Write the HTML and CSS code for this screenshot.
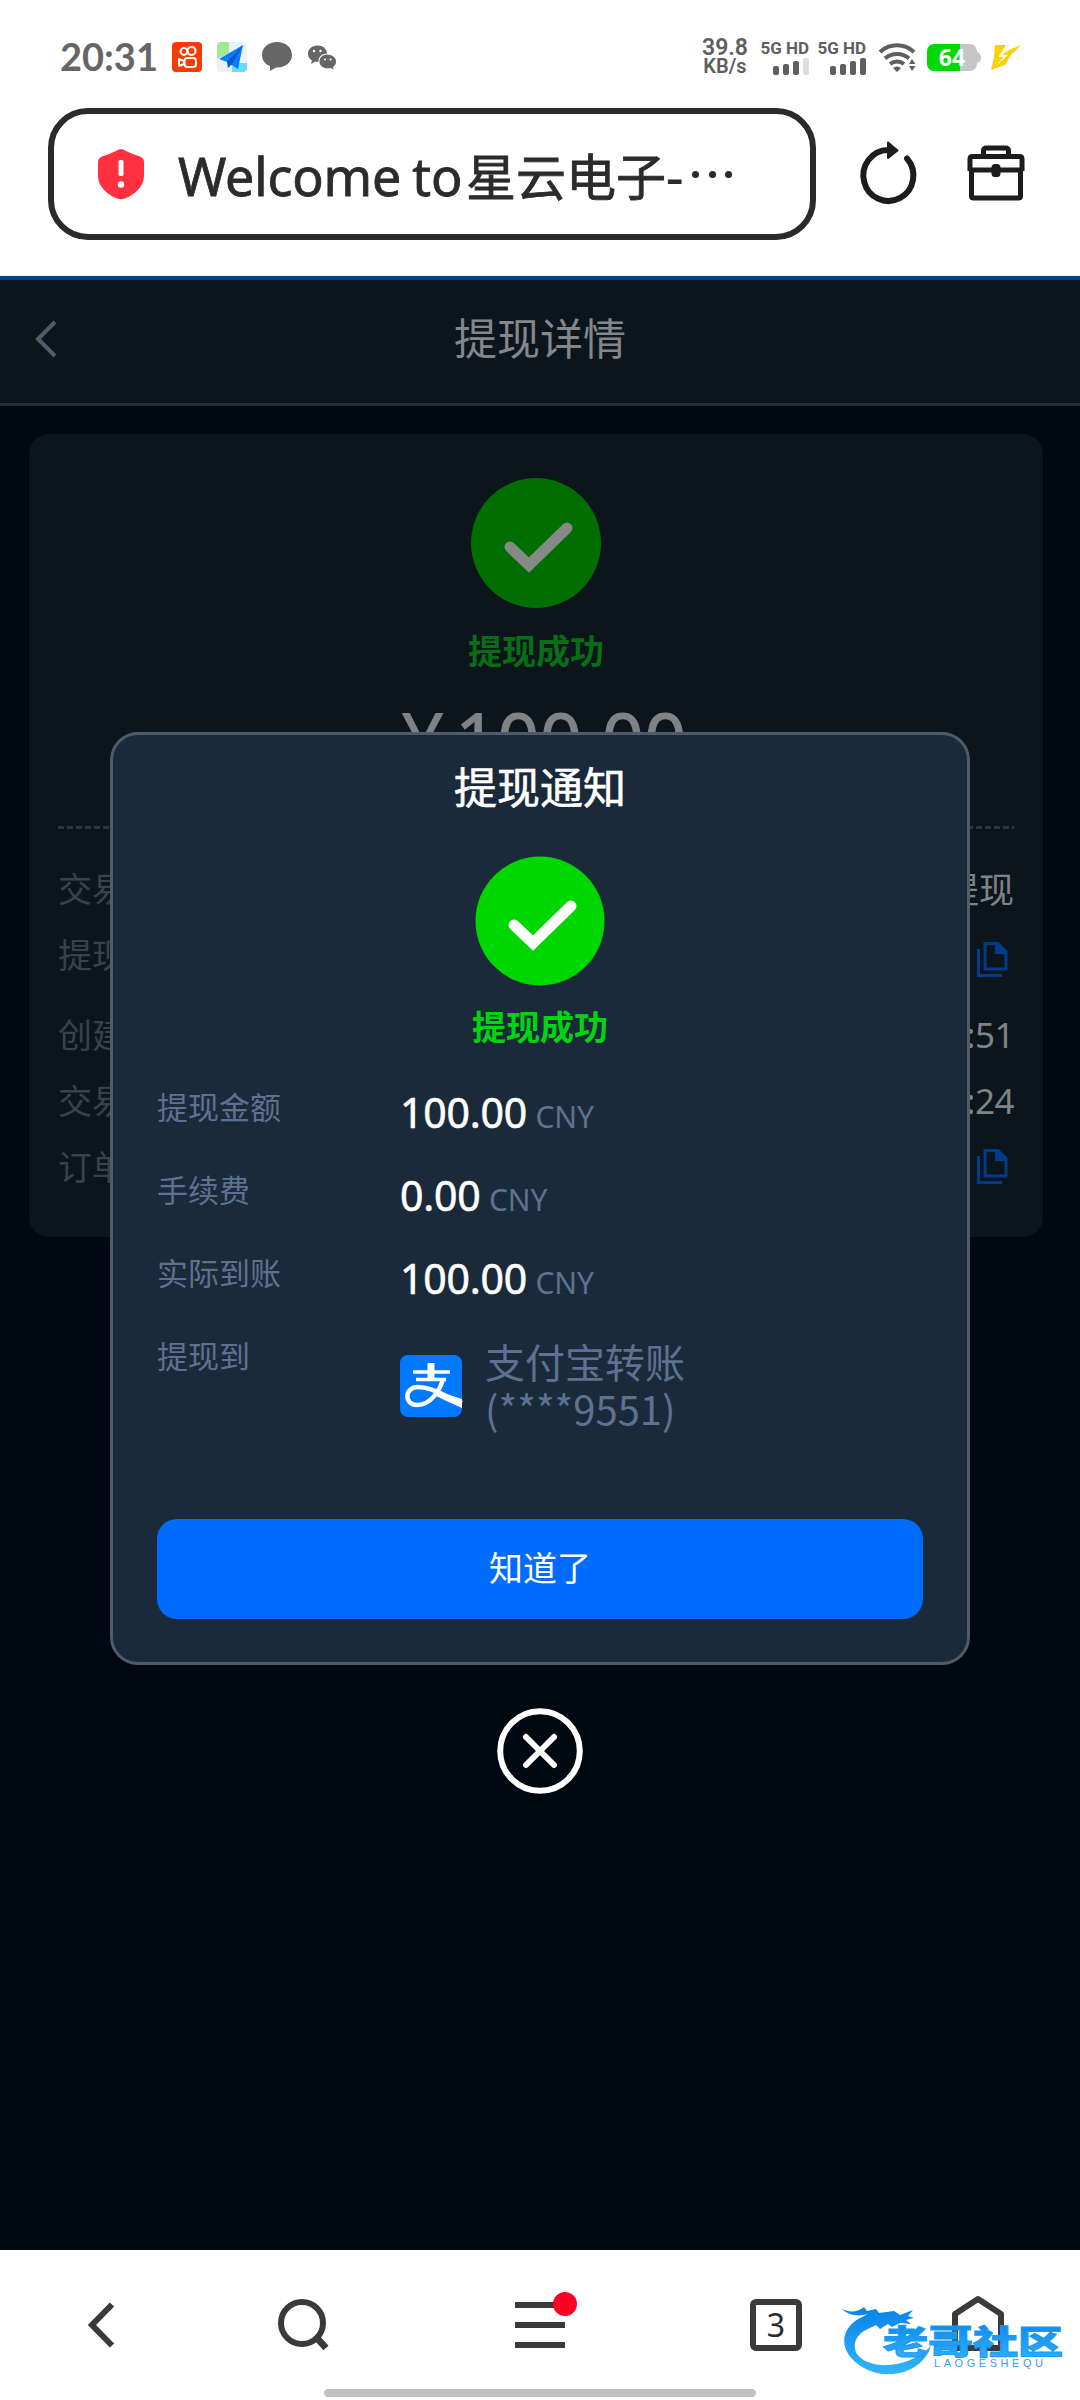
FILE: index.html
```
<!DOCTYPE html>
<html lang="zh-CN">
<head>
  <meta charset="UTF-8" />
  <title>提现详情</title>
  <link rel="stylesheet" href="styles.css">
</head>
<body>

  <!-- 状态栏 -->
  <div class="status-bar">
    <div class="status-left">
      <span class="clock">20:31</span>
      <svg class="app-icon" viewBox="0 0 30 30">
        <rect width="30" height="30" rx="4" fill="#fb3a00"/>
        <g fill="none" stroke="#fff" stroke-width="2">
          <circle cx="12" cy="9.5" r="3.4"/>
          <circle cx="19.5" cy="9" r="4"/>
          <rect x="12.5" y="16" width="11.5" height="9" rx="3"/>
          <path d="M12 19 L7 17 V24 L12 22 Z" stroke-linejoin="round"/>
        </g>
      </svg>
      <svg class="app-icon map-icon" viewBox="0 0 30 30">
        <rect width="30" height="30" rx="4" fill="#e9f1f9"/>
        <path d="M4 0 H12 V11 L0 17 V4 A4 4 0 0 1 4 0 Z" fill="#a0ea91"/>
        <path d="M15 30 V24 L22 21 H30 V26 A4 4 0 0 1 26 30 Z" fill="#68dcfb"/>
        <path d="M26 3 L2 17 L10 20 L21 27 Z" fill="#0b7dfa"/>
        <path d="M26 3 L10 20 L11 26 L15 22 Z" fill="#0558ce"/>
      </svg>
      <svg class="app-icon chat-icon" viewBox="0 0 30 30">
        <path d="M15 0 C23 0 30 5 30 13 C30 21 22 26 14 25.500 L8 29 L8 24 C3 22 0 18 0 13 C0 5 7 0 15 0 Z" fill="#666"/>
      </svg>
      <svg class="wechat-icon" viewBox="0 0 28 25">
        <path d="M9.500 0.500 C15 0.500 19 4 19 8.500 C14 8.500 10 12 10.500 17 L7 16.500 L3 19 L4 15.500 C1.500 14 0 12 0 9 C0 4 4 0.500 9.500 0.500 Z" fill="#666"/>
        <path d="M19 9.500 C24 9.500 28 12.500 28 16.500 C28 19 27 20.500 25 22 L25.500 24.500 L22.500 23 C16 24.500 11.500 21 11.500 16.500 C11.500 12.500 15 9.500 19 9.500 Z" fill="#666"/>
        <g fill="#fff"><circle cx="6" cy="6" r="1.200"/><circle cx="12.500" cy="6" r="1.200"/><circle cx="17" cy="14.500" r="1"/><circle cx="22.500" cy="14.500" r="1"/></g>
      </svg>
    </div>

    <div class="status-right">
      <div class="net-speed"><span>39.8</span><span>KB/s</span></div>
      <div class="signal">
        <span>5G HD</span>
        <svg viewBox="0 0 36 17" fill="#5f5f5f">
          <rect x="0" y="8" width="6" height="9" rx="2"/>
          <rect x="10" y="6" width="6" height="11" rx="2"/>
          <rect x="20" y="3" width="6" height="14" rx="2"/>
          <rect x="30" y="0" width="6" height="17" rx="2" fill="#dedede"/>
        </svg>
      </div>
      <div class="signal">
        <span>5G HD</span>
        <svg viewBox="0 0 36 17" fill="#5f5f5f">
          <rect x="0" y="8" width="6" height="9" rx="2"/>
          <rect x="10" y="6" width="6" height="11" rx="2"/>
          <rect x="20" y="3" width="6" height="14" rx="2"/>
          <rect x="30" y="0" width="6" height="17" rx="2"/>
        </svg>
      </div>
      <svg class="wifi" viewBox="0 0 37 29">
        <g fill="none" stroke="#5f5f5f" stroke-width="4">
          <path d="M1 9 A25 25 0 0 1 35 9"/>
          <path d="M6 15.500 A18 18 0 0 1 30 15.500"/>
          <path d="M11 21 A11 11 0 0 1 25 21"/>
        </g>
        <path d="M14 25 Q18 22 22 25 L18 29 Z M30 21 L33 16 L36.500 21 Z M30 23 H36.500 L33 28 Z" fill="#5f5f5f"/>
      </svg>
      <svg class="battery" viewBox="0 0 54 27">
        <rect x="4" width="46" height="27" rx="7" fill="#c6c6c6"/>
        <path d="M50 8 Q54 9 54 13.500 Q54 18 50 19 Z" fill="#c6c6c6"/>
        <path d="M7 0 H33 V27 H7 A7 7 0 0 1 0 20 V7 A7 7 0 0 1 7 0 Z" fill="#00d800"/>
        <text x="25" y="21.500" class="battery-text">64</text>
      </svg>
      <svg class="bolt" viewBox="0 0 30 25">
        <path d="M4 0 H15 L12 9 L18 5 L30 0 L20 10 L14 20 L0 25 L3 12 Z" fill="#fad00a"/>
        <path d="M15 0 L7 12 H12 L5 21 L17 10 H12 L18 0 Z" fill="#fff8da"/>
      </svg>
    </div>
  </div>

  <!-- 浏览器地址栏 -->
  <div class="browser-bar">
    <div class="url-box">
      <svg class="shield" viewBox="0 0 46 50">
        <path d="M23 0 Q25 0 28 2 Q34 5 42 7.500 Q46 9 46 13 V27 C46 38 36 46 27 49.500 Q23 51 19 49.500 C10 46 0 38 0 27 V13 Q0 9 4 7.500 Q12 5 18 2 Q21 0 23 0 Z" fill="#ff3141"/>
        <rect x="20.500" y="11" width="5" height="16" rx="1.500" fill="#fff"/>
        <circle cx="23" cy="35.500" r="3.200" fill="#fff"/>
      </svg>
      <div class="url-text"><span class="latin">Welcome to</span><span>星云电子</span><span class="dash">-</span><i></i><i></i><i></i></div>
    </div>
    <svg class="refresh" viewBox="0 0 56 62">
      <path d="M47 17.500 A25 25.500 0 1 1 28 9" fill="none" stroke="#1c1c1c" stroke-width="6" stroke-linecap="round"/>
      <path d="M28 1.500 L37.500 9.500 L28 17 Z" fill="#1c1c1c" stroke="#1c1c1c" stroke-width="2" stroke-linejoin="round"/>
    </svg>
    <svg class="toolbox" viewBox="0 0 58 56">
      <g fill="none" stroke="#1c1c1c" stroke-width="5" stroke-linejoin="round">
        <path d="M3 26 V14 Q3 11.500 5.500 11.500 H52.500 Q55 11.500 55 14 V26"/>
        <path d="M4.500 25 H53.500 V51 Q53.500 53 51.500 53 H6.500 Q4.500 53 4.500 51 Z"/>
        <path d="M16.500 11 V6 Q16.500 3 19.500 3 H38.500 Q41.500 3 41.500 6 V11"/>
      </g>
      <rect x="24.500" y="19" width="9" height="13" rx="3.500" fill="#1c1c1c"/>
    </svg>
  </div>

  <!-- 页面内容 -->
  <main>
    <header>
      <svg class="back" viewBox="0 0 24 38"><path d="M21 2 L4 19 L21 36" fill="none" stroke="#4f5c6a" stroke-width="4"/></svg>
      <h1>提现详情</h1>
    </header>

    <section class="card">
      <svg class="check" viewBox="0 0 130 130">
        <circle cx="65" cy="65" r="65" fill="#006e00"/>
        <path d="M39 69 L58 87 L96 50" fill="none" stroke="#868a86" stroke-width="11" stroke-linecap="round"/>
      </svg>
      <div class="result">提现成功</div>
      <div class="amount">¥ 100.00</div>
      <div class="divider"></div>
      <ul class="detail-list">
        <li><span>交易</span><b>提现</b></li>
        <li class="tall"><span>提现</span>
          <svg class="copy" viewBox="0 0 31 35"><path d="M1.500 7 V33.500 H25" fill="none" stroke="#003c87" stroke-width="3"/><path d="M8 1.500 H21 L29 9.500 V27 H8 Z" fill="none" stroke="#003c87" stroke-width="3"/><path d="M18 2 H22 L30 10 V12 H18 Z" fill="#003c87"/></svg>
        </li>
        <li><span>创建</span><b class="time">:51</b></li>
        <li><span>交易</span><b class="time">:24</b></li>
        <li><span>订单</span>
          <svg class="copy" viewBox="0 0 31 35"><path d="M1.500 7 V33.500 H25" fill="none" stroke="#003c87" stroke-width="3"/><path d="M8 1.500 H21 L29 9.500 V27 H8 Z" fill="none" stroke="#003c87" stroke-width="3"/><path d="M18 2 H22 L30 10 V12 H18 Z" fill="#003c87"/></svg>
        </li>
      </ul>
    </section>

    <!-- 弹窗 -->
    <div class="popup">
      <div class="dialog">
        <h2>提现通知</h2>
        <svg class="check" viewBox="0 0 130 130">
          <circle cx="65" cy="65" r="64.500" fill="#00d600"/>
          <path d="M39 69 L58 87 L96 50" fill="none" stroke="#fff" stroke-width="11" stroke-linecap="round"/>
        </svg>
        <div class="result">提现成功</div>
        <dl>
          <dt>提现金额</dt><dd>100.00 <small>CNY</small></dd>
          <dt>手续费</dt><dd>0.00 <small>CNY</small></dd>
          <dt>实际到账</dt><dd>100.00 <small>CNY</small></dd>
          <dt>提现到</dt>
          <dd class="account">
            <svg viewBox="0 0 62 62">
              <rect width="62" height="62" rx="8" fill="#0079ff"/>
              <g fill="none" stroke="#fff">
                <path d="M13 17 H50 M16 24.500 H46" stroke-width="3.500"/>
                <path d="M31 8 V24" stroke-width="7"/>
                <path d="M43 24 C40 35 31 50 17 50 C4 50 4 32 18 32 C31 32 42 40 62 48" stroke-width="4.500"/>
              </g>
              <path d="M40 37 L62 44 V53 Q48 47 36 41 Z" fill="#fff"/>
            </svg>
            <p>支付宝转账<br>(****9551)</p>
          </dd>
        </dl>
        <button type="button">知道了</button>
      </div>
      <svg class="close" viewBox="0 0 86 86">
        <circle cx="43" cy="43" r="39.800" fill="none" stroke="#fff" stroke-width="6"/>
        <path d="M29 29 L57 57 M57 29 L29 57" stroke="#fff" stroke-width="6" stroke-linecap="round"/>
      </svg>
    </div>
  </main>

  <!-- 底部导航 -->
  <footer>
    <nav>
      <svg viewBox="0 0 60 60"><path d="M43 9.500 L23 30 L43 50.500" fill="none" stroke="#3a3a3a" stroke-width="6"/></svg>
      <svg viewBox="0 0 60 60"><circle cx="29" cy="28" r="21" fill="none" stroke="#3a3a3a" stroke-width="6"/><path d="M43 42 L53 53" stroke="#3a3a3a" stroke-width="7"/></svg>
      <svg viewBox="0 0 60 60"><path d="M5 10 H55 M5 30 H55 M5 50 H55" stroke="#3a3a3a" stroke-width="6"/><circle cx="55" cy="9" r="12" fill="#ff0024"/></svg>
      <span class="tabs">3</span>
      <svg viewBox="0 0 60 60"><path d="M30 4 L53 19 V53 H7 V19 Z" fill="none" stroke="#3a3a3a" stroke-width="6" stroke-linejoin="round"/></svg>
    </nav>
    <div class="home-handle"></div>
    <!-- 水印 -->
    <svg class="watermark" viewBox="0 0 230 80">
      <defs>
        <linearGradient id="blue" x1="0" y1="0" x2="0" y2="1">
          <stop offset="0" stop-color="#0783e8"/>
          <stop offset="1" stop-color="#35b4fb"/>
        </linearGradient>
      </defs>
      <path d="M2 9 C10 13 18 12 24 7 L27 11 L36 9 L39 13 L54 11 L60 15 L73 10 L68 16 L74 18 L66 20 L71 24 L60 23 L52 27 L48 24 L40 29 L36 25 L30 28 C15 34 12 45 17 54 C28 70 68 70 91 46 C83 72 48 82 24 68 C-4 52 0 27 22 17 L28 14 C18 17 8 15 2 9 Z" fill="url(#blue)"/>
      <text x="43" y="54" class="mark-cn" textLength="180" lengthAdjust="spacingAndGlyphs">老哥社区</text>
      <text x="94" y="67" class="mark-en" textLength="109">LAOGESHEQU</text>
    </svg>
  </footer>

</body>
</html>
```
FILE: styles.css
```
* {
  margin: 0;
  padding: 0;
  box-sizing: border-box;
}

body {
  width: 1080px;
  height: 2400px;
  display: flex;
  flex-direction: column;
  font-family: "Noto Sans CJK SC", sans-serif;
  background-color: #fff;
  overflow: hidden;
}

svg {
  display: block;
  flex-shrink: 0;
  overflow: visible;
}

/* 状态栏 */
.status-bar {
  height: 108px;
  padding: 27px 59px 0 60px;
  display: flex;
  justify-content: space-between;
  align-items: flex-start;
  color: #5f5f5f;
}

.status-left,
.status-right {
  display: flex;
  align-items: center;
  height: 60px;
}

.clock {
  width: 112px;
  font-family: Lato, sans-serif;
  font-size: 38px;
  font-weight: 700;
  line-height: 56px;
  padding-bottom: 3px;
  color: #666;
}

.app-icon {
  width: 30px;
  height: 30px;
  margin-right: 15px;
}

.wechat-icon {
  width: 28px;
  height: 25px;
  margin-left: 1px;
}

.net-speed {
  display: flex;
  flex-direction: column;
  align-items: center;
  width: 46px;
  margin-right: 13px;
  font-family: Roboto, sans-serif;
  font-size: 20px;
  font-weight: 600;
  line-height: 19px;
}

.net-speed span:first-child {
  font-size: 23px;
}

.signal {
  width: 48px;
  margin-right: 9px;
  display: flex;
  flex-direction: column;
  align-items: flex-end;
  gap: 2px;
  font-family: Roboto, sans-serif;
  font-size: 17px;
  font-weight: 700;
  line-height: 16px;
  white-space: nowrap;
}

.signal svg {
  width: 36px;
  height: 17px;
}

.wifi {
  width: 37px;
  height: 29px;
  margin: 0 11px 0 4px;
}

.battery {
  width: 54px;
  height: 27px;
  margin-right: 10px;
}

.battery-text {
  font-family: "Open Sans", sans-serif;
  font-size: 23px;
  font-weight: 700;
  fill: #fff;
  text-anchor: middle;
}

.bolt {
  width: 30px;
  height: 25px;
}

/* 地址栏 */
.browser-bar {
  height: 168px;
  padding: 0 55px 0 48px;
  display: flex;
  align-items: flex-start;
  border-bottom: 2px solid #f0f5f6;
}

.url-box {
  width: 768px;
  height: 132px;
  padding: 0 44px;
  display: flex;
  align-items: center;
  border: 6px solid #2b2b2b;
  border-radius: 40px;
}

.shield {
  width: 46px;
  height: 50px;
}

.url-text {
  display: flex;
  align-items: center;
  margin-left: 34px;
  font-size: 50px;
  line-height: 70px;
  color: #2b2b2b;
  white-space: nowrap;
  -webkit-text-stroke: 0.8px #2b2b2b;
}

.url-text .latin {
  width: 288px;
  padding-top: 3px;
  font-family: "Noto Sans", sans-serif;
  font-size: 52px;
  letter-spacing: -0.2px;
  word-spacing: -2px;
}

.url-text .dash {
  margin-right: 9px;
}

.url-text i {
  width: 7px;
  height: 7px;
  margin-right: 9.500px;
  border-radius: 50%;
  background-color: #2b2b2b;
}

.refresh {
  width: 56px;
  height: 62px;
  margin: 33px 0 0 44px;
}

.toolbox {
  width: 58px;
  height: 56px;
  margin: 37px 0 0 51px;
}

/* 页面 */
main {
  position: relative;
  flex: 1;
  background-color: #000811;
  border-top: 4px solid #004288;
}

header {
  display: flex;
  height: 126px;
  padding: 0 34px 11px;
  align-items: center;
  background-color: #0d151c;
  border-bottom: 3px solid #262e38;
}

.back {
  width: 24px;
  height: 38px;
  margin-top: 5px;
}

h1 {
  flex: 1;
  margin-right: 24px;
  text-align: center;
  font-size: 43px;
  font-weight: 400;
  color: #84878a;
}

.card {
  height: 803px;
  margin: 28px 37px 0 29px;
  padding: 44px 29px 0;
  display: flex;
  flex-direction: column;
  align-items: center;
  border-radius: 20px;
  background-color: #0d151c;
}

.check {
  width: 130px;
  height: 130px;
}

.result {
  margin-top: 20px;
  font-size: 34px;
  font-weight: 700;
  line-height: 44px;
  color: #086d14;
}

.amount {
  margin-top: 27px;
  padding-left: 16px;
  font-family: "Noto Sans", sans-serif;
  font-size: 74px;
  line-height: 80px;
  word-spacing: -8px;
  color: #808386;
  -webkit-text-stroke: 1px #808386;
}

.divider {
  width: 100%;
  height: 3px;
  margin-top: 47px;
  background: repeating-linear-gradient(to right, #2d343b 0, #2d343b 6px, transparent 6px, transparent 9px);
}

.detail-list {
  width: 100%;
  margin-top: 26px;
  list-style: none;
}

.detail-list li {
  height: 66px;
  display: flex;
  justify-content: space-between;
  align-items: center;
  font-size: 34px;
  line-height: 66px;
  color: #394149;
}

.detail-list li.tall {
  height: 80px;
}

.detail-list .tall span {
  align-self: flex-start;
}

.detail-list .tall .copy {
  margin-bottom: 3px;
}

.detail-list b {
  font-size: 35px;
  font-weight: 400;
  color: #7f8386;
}

.detail-list .time {
  padding-top: 2px;
  font-family: "Noto Sans", sans-serif;
  letter-spacing: -0.5px;
}

.copy {
  width: 31px;
  height: 35px;
  margin-right: 6px;
}

/* 弹窗 */
.popup {
  position: absolute;
  inset: 0;
  padding-top: 452px;
  display: flex;
  flex-direction: column;
  align-items: center;
}

.dialog {
  width: 860px;
  height: 933px;
  padding: 20px 44px 43px;
  display: flex;
  flex-direction: column;
  align-items: center;
  border: 3px solid #505b69;
  border-radius: 28px;
  background-color: #1b2a3a;
}

h2 {
  font-size: 43px;
  font-weight: 400;
  line-height: 60px;
  color: #fff;
  -webkit-text-stroke: 0.6px #fff;
}

.dialog .check {
  margin-top: 41px;
}

.dialog .result {
  margin-top: 18px;
  color: #00d412;
}

dl {
  width: 100%;
  margin-top: 33px;
  display: grid;
  grid-template-columns: 243px 1fr;
  grid-template-rows: 83px 83px 83px 101px;
}

dt {
  font-size: 31px;
  line-height: 50px;
  color: #5d7290;
}

dd {
  font-family: "Noto Sans", sans-serif;
  font-size: 41px;
  line-height: 62px;
  letter-spacing: -0.2px;
  color: #fff;
  -webkit-text-stroke: 0.6px #fff;
}

dd small {
  margin-left: -2px;
  font-size: 30px;
  color: #5d7290;
  -webkit-text-stroke: 0;
}

.account {
  display: flex;
  align-items: center;
  padding-top: 8px;
  font-family: "Noto Sans CJK SC", sans-serif;
  color: #5d7290;
  letter-spacing: 0;
  -webkit-text-stroke: 0;
}

.account svg {
  width: 62px;
  height: 62px;
  margin: 3px 23px 0 0;
}

.account p {
  font-size: 40px;
  line-height: 47px;
}

button {
  width: 100%;
  height: 100px;
  margin-top: auto;
  padding-bottom: 6px;
  border: none;
  border-radius: 20px;
  background-color: #006cff;
  font-family: inherit;
  font-size: 34px;
  color: #fff;
}

.close {
  width: 86px;
  height: 86px;
  margin-top: 43px;
}

/* 底部 */
footer {
  position: relative;
  height: 150px;
  background-color: #fff;
}

nav {
  height: 139px;
  padding: 10px 0 0 69px;
  display: grid;
  grid-template-columns: 204px 237px 240px 198px 60px;
  align-items: center;
}

nav svg {
  width: 60px;
  height: 60px;
}

.tabs {
  width: 52px;
  height: 52px;
  border: 6px solid #3a3a3a;
  border-radius: 6px;
  font-family: "Noto Sans", sans-serif;
  font-size: 32px;
  line-height: 39px;
  text-align: center;
  color: #2b2b2b;
}

.home-handle {
  width: 432px;
  height: 8px;
  margin: 0 auto;
  border-radius: 4px;
  background-color: #c1c1c1;
}

.watermark {
  position: absolute;
  left: 840px;
  top: 50px;
  width: 230px;
  height: 80px;
}

.mark-cn {
  font-size: 33px;
  font-weight: 900;
  fill: url(#blue);
  stroke: #1d99f2;
  stroke-width: 1px;
}

.mark-en {
  font-family: "Liberation Sans", sans-serif;
  font-size: 11px;
  fill: #3d9df0;
}
```
